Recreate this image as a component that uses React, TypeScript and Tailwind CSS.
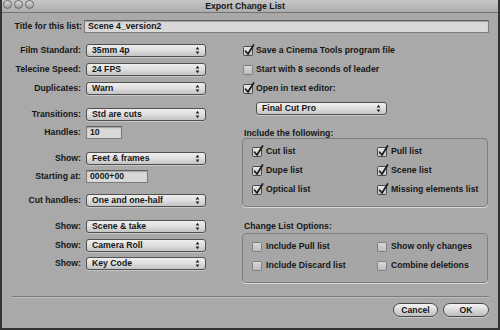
import React from "react";

const txt = "text-[8.7px] font-bold leading-none text-[#161616] whitespace-nowrap";

function Arrows() {
  return (
    <svg width="5" height="9" viewBox="0 0 5 9" className="shrink-0">
      <path d="M2.5 0.8 L4.3 3.6 L0.7 3.6 Z" fill="#1e1e1e" />
      <path d="M2.5 8.2 L4.3 5.4 L0.7 5.4 Z" fill="#1e1e1e" />
    </svg>
  );
}

function Popup({ value, className }: { value: string; className: string }) {
  return (
    <div
      className={`${className} h-[13px] rounded-[3px] border border-[#505050] bg-gradient-to-b from-[#efefef] via-[#dedede] to-[#c4c4c4] shadow-[0_1px_0_rgba(255,255,255,0.35)] flex items-center justify-between pl-[5px] pr-[5px]`}
    >
      <span className={txt}>{value}</span>
      <Arrows />
    </div>
  );
}

function Field({ value, className }: { value: string; className: string }) {
  return (
    <div
      className={`${className} h-[13px] border border-[#7c7c7c] border-t-[#5e5e5e] bg-[#d8d8d8] shadow-[inset_0_1px_1px_rgba(0,0,0,0.25)] flex items-center pl-[3px]`}
    >
      <span className={txt}>{value}</span>
    </div>
  );
}

function Check({ checked }: { checked?: boolean }) {
  return (
    <div
      className={`relative w-[10px] h-[10px] shrink-0 rounded-[1.5px] border ${
        checked
          ? "border-[#474747] bg-gradient-to-b from-[#e8e8e8] to-[#c6c6c6]"
          : "border-[#7e7e7e] bg-gradient-to-b from-[#d8d8d8] to-[#bdbdbd]"
      }`}
    >
      {checked && (
        <svg
          className="absolute left-[0px] top-[-3px] overflow-visible"
          width="11"
          height="12"
          viewBox="0 0 11 12"
        >
          <path
            d="M1.6 7.2 L4 10 L9.6 1"
            fill="none"
            stroke="#1a1a1a"
            strokeWidth="1.7"
            strokeLinecap="round"
            strokeLinejoin="round"
          />
        </svg>
      )}
    </div>
  );
}

function CheckRow({ label, checked, gap }: { label: string; checked?: boolean; gap: string }) {
  return (
    <div className={`flex items-center h-[13px] ${gap}`}>
      <Check checked={checked} />
      <span className={txt}>{label}</span>
    </div>
  );
}

function Row({ label, children, className }: { label: string; children: React.ReactNode; className: string }) {
  return (
    <div className={`flex items-center h-[13px] ${className}`}>
      <div className={`w-[71px] text-right ${txt}`}>{label}</div>
      <div className="ml-[5px]">{children}</div>
    </div>
  );
}

function Light() {
  return (
    <div className="w-[9px] h-[9px] rounded-full border border-[#6a6a6a] bg-gradient-to-b from-[#dcdcdc] to-[#9a9a9a]" />
  );
}

function Button({ label, className }: { label: string; className: string }) {
  return (
    <div
      className={`${className} h-[14px] rounded-full border border-[#4a4a4a] bg-gradient-to-b from-[#f4f4f4] via-[#dadada] to-[#bdbdbd] shadow-[0_1px_0_rgba(255,255,255,0.4)] flex items-center justify-center`}
    >
      <span className={txt}>{label}</span>
    </div>
  );
}

export default function App() {
  return (
    <div className="w-[500px] h-[330px] bg-[#a9a9a9] border-l-2 border-r-2 border-b-2 border-[#333] font-['Liberation_Sans',Arial,sans-serif] flex flex-col overflow-hidden">
      {/* Title bar */}
      <div className="h-[13px] shrink-0 bg-gradient-to-b from-[#c6c6c6] to-[#adadad] border-b border-[#737373] flex items-center relative">
        <div className="flex items-center gap-[2px] pl-[1px] -mt-[3px]">
          <Light />
          <Light />
          <Light />
        </div>
        <div className="flex-1 flex justify-center pr-[42px]">
          <span className={txt}>Export Change List</span>
        </div>
      </div>

      <div className="flex flex-col pl-[8px] pr-[9px]">
        {/* Title row */}
        <div className="flex items-center h-[13px] mt-[7px]">
          <div className={`w-[72px] text-right ${txt}`}>Title for this list:</div>
          <Field value="Scene 4_version2" className="ml-[2px] w-[405px]" />
        </div>

        {/* columns */}
        <div className="flex h-[252px] mt-[11px]">
          {/* left */}
          <div className="w-[196px] flex flex-col">
            <Row label="Film Standard:" className="">
              <Popup value="35mm 4p" className="w-[120px]" />
            </Row>
            <Row label="Telecine Speed:" className="mt-[6px]">
              <Popup value="24 FPS" className="w-[120px]" />
            </Row>
            <Row label="Duplicates:" className="mt-[6px]">
              <Popup value="Warn" className="w-[120px]" />
            </Row>
            <Row label="Transitions:" className="mt-[13px]">
              <Popup value="Std are cuts" className="w-[120px]" />
            </Row>
            <Row label="Handles:" className="mt-[5px]">
              <Field value="10" className="w-[36px]" />
            </Row>
            <Row label="Show:" className="mt-[13px]">
              <Popup value="Feet & frames" className="w-[120px]" />
            </Row>
            <Row label="Starting at:" className="mt-[5px]">
              <Field value="0000+00" className="w-[62px]" />
            </Row>
            <Row label="Cut handles:" className="mt-[11px]">
              <Popup value="One and one-half" className="w-[120px]" />
            </Row>
            <Row label="Show:" className="mt-[13px]">
              <Popup value="Scene & take" className="w-[120px]" />
            </Row>
            <Row label="Show:" className="mt-[6px]">
              <Popup value="Camera Roll" className="w-[120px]" />
            </Row>
            <Row label="Show:" className="mt-[5px]">
              <Popup value="Key Code" className="w-[120px]" />
            </Row>
          </div>

          {/* right */}
          <div className="ml-[36px] w-[247px] flex flex-col">
            <div className="pl-[1px] flex flex-col">
              <CheckRow label="Save a Cinema Tools program file" checked gap="gap-[3px]" />
              <div className="mt-[6px]">
                <CheckRow label="Start with 8 seconds of leader" gap="gap-[3px]" />
              </div>
              <div className="mt-[6px]">
                <CheckRow label="Open in text editor:" checked gap="gap-[3px]" />
              </div>
            </div>
            <Popup value="Final Cut Pro" className="ml-[14px] mt-[7px] w-[131px]" />

            <div className={`mt-[13px] h-[10px] pl-[2px] flex items-center ${txt}`}>Include the following:</div>
            <div className="w-[246px] h-[69px] rounded-[4px] border border-[#7e7e7e] bg-[#a6a6a6] shadow-[0_1px_0_#d6d6d6] pt-[6px] pl-[9px]">
              <div className="grid grid-cols-[125px_1fr] gap-y-[6px]">
                <CheckRow label="Cut list" checked gap="gap-[4px]" />
                <CheckRow label="Pull list" checked gap="gap-[4px]" />
                <CheckRow label="Dupe list" checked gap="gap-[4px]" />
                <CheckRow label="Scene list" checked gap="gap-[4px]" />
                <CheckRow label="Optical list" checked gap="gap-[4px]" />
                <CheckRow label="Missing elements list" checked gap="gap-[4px]" />
              </div>
            </div>

            <div className={`mt-[14px] h-[10px] pl-[2px] flex items-center ${txt}`}>Change List Options:</div>
            <div className="mt-[2px] w-[246px] h-[50px] rounded-[4px] border border-[#7e7e7e] bg-[#a6a6a6] shadow-[0_1px_0_#d6d6d6] pt-[6px] pl-[9px]">
              <div className="grid grid-cols-[125px_1fr] gap-y-[6px]">
                <CheckRow label="Include Pull list" gap="gap-[4px]" />
                <CheckRow label="Show only changes" gap="gap-[4px]" />
                <CheckRow label="Include Discard list" gap="gap-[4px]" />
                <CheckRow label="Combine deletions" gap="gap-[4px]" />
              </div>
            </div>
          </div>
        </div>

        {/* separator */}
        <div className="ml-[2px] h-[1px] bg-[#7a7a7a]" />
        <div className="ml-[2px] h-[1px] bg-[#bdbdbd]" />

        {/* buttons */}
        <div className="flex justify-end gap-[5px] mt-[5px]">
          <Button label="Cancel" className="w-[45px]" />
          <Button label="OK" className="w-[46px]" />
        </div>
      </div>
    </div>
  );
}
